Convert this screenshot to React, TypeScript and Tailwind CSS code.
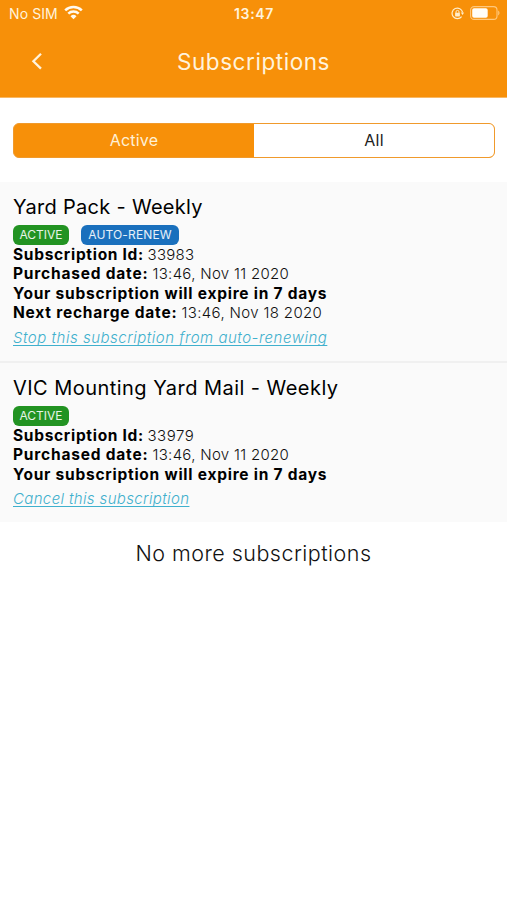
import type { ReactNode } from "react";

function Row({ children }: { children: ReactNode }) {
  return <div className="flex h-[19.6px] items-baseline whitespace-pre text-[15px] leading-[20px]">{children}</div>;
}

function Label({ className, children }: { className: string; children: ReactNode }) {
  return <b className={`shrink-0 text-[15.5px] font-bold text-black ${className}`}>{children}</b>;
}

function Value({ className, children }: { className: string; children: ReactNode }) {
  return <span className={`shrink-0 font-light text-[#111] ${className}`}>{children}</span>;
}

function Badge({ className, children }: { className: string; children: ReactNode }) {
  return (
    <span className={`flex h-[20px] items-center justify-center rounded-[6px] text-[12px] leading-none text-white/90 ${className}`}>
      {children}
    </span>
  );
}

function StatusBar() {
  return (
    <div className="grid h-[27px] grid-cols-3 items-center text-[#fff3dc]">
      <div className="flex items-center gap-[6px] pl-[9px] text-[14px] leading-none">
        <span className="tracking-[0.1px]">No SIM</span>
        <svg className="-mt-[2px]" width="19" height="15" viewBox="0 0 19 15" fill="none" stroke="#fffaf0" strokeWidth="2.5">
          <path d="M1.2 5.3a11.8 11.8 0 0 1 16.6 0" />
          <path d="M4.3 8.6a7.4 7.4 0 0 1 10.4 0" />
          <path d="M9.5 14.3 6.5 11.2a4.3 4.3 0 0 1 6 0Z" fill="#fffaf0" stroke="none" />
        </svg>
      </div>
      <div className="pl-[1px] text-center text-[14px] font-semibold leading-none tracking-[0.7px]">13:47</div>
      <div className="flex items-center justify-end gap-[6px] pr-[7px]">
        <svg width="13" height="13" viewBox="0 0 13 13" fill="none" stroke="#ffedcc">
          <path d="M10.6 9.6A5.3 5.3 0 1 1 11.6 5.4" strokeWidth="1.2" />
          <path d="M9.8 5.6h3.2l-1.4 2.4z" fill="#ffedcc" stroke="none" />
          <path d="M5 6V4.9a1.5 1.5 0 0 1 3 0V6" strokeWidth="1" />
          <rect x="4.1" y="5.8" width="4.8" height="3.6" rx=".6" fill="#ffedcc" stroke="none" />
        </svg>
        <svg className="-mt-[1px]" width="30" height="14" viewBox="0 0 30 14" fill="none">
          <rect x=".6" y=".6" width="26.4" height="12.8" rx="3.5" stroke="#ffc87d" strokeWidth="1.1" />
          <rect x="2.2" y="2.2" width="15.5" height="9.6" rx="1.8" fill="#fffdf8" />
          <path d="M28.2 4.6c1.7.7 1.7 4.1 0 4.8z" fill="#ffc87d" />
        </svg>
      </div>
    </div>
  );
}

export default function App() {
  return (
    <div className="flex h-[900px] w-full flex-col overflow-hidden bg-white font-['Inter',sans-serif] text-black">
      <header className="h-[98px] border-b border-[#f8b865] bg-[#f79009]">
        <StatusBar />
        <div className="grid h-[70px] grid-cols-[60px_1fr_60px] items-center">
          <svg className="ml-[31px] -mt-[2px]" width="12" height="18" viewBox="0 0 12 18" fill="none" stroke="#fff3dc" strokeWidth="2.3">
            <path d="M10 1.8 2.4 9.2 10 16.6" />
          </svg>
          <h1 className="text-center text-[22.5px] leading-none tracking-[0.55px] text-[#fff3dc]">Subscriptions</h1>
        </div>
      </header>

      <div className="h-[84px] pl-[13px] pr-[12px] pt-[24.5px]">
        <div className="flex h-[35.5px] overflow-hidden rounded-[6px] border border-[#f09a2c] bg-[#f79009] text-[16px] leading-none">
          <div className="flex flex-1 items-center justify-center tracking-[0.2px] text-[#fff0d6]">Active</div>
          <div className="flex flex-1 items-center justify-center bg-white tracking-[0.3px] text-[#222]">All</div>
        </div>
      </div>

      <section className="h-[181px] border-b-2 border-[#f0f0f0] bg-[#fafafa] px-[13px] pt-[13px]">
        <h2 className="h-[29.5px] text-[20px] leading-[24px] tracking-[0.3px]">Yard Pack - Weekly</h2>
        <div className="flex gap-[12px]">
          <Badge className="w-[56px] bg-[#229322]">ACTIVE</Badge>
          <Badge className="w-[98px] bg-[#1a70bd] tracking-[0.15px]">AUTO-RENEW</Badge>
        </div>
        <Row>
          <Label className="w-[134.5px] tracking-[0.7px]">Subscription Id:</Label>
          <Value className="tracking-[0.3px]">33983</Value>
        </Row>
        <Row>
          <Label className="w-[139.5px] tracking-[0.8px]">Purchased date:</Label>
          <Value className="tracking-[0.3px]">13:46, Nov 11 2020</Value>
        </Row>
        <Row>
          <Label className="tracking-[0.76px]">Your subscription will expire in 7 days</Label>
        </Row>
        <Row>
          <Label className="w-[168.5px] tracking-[0.78px]">Next recharge date:</Label>
          <Value className="tracking-[0.35px]">13:46, Nov 18 2020</Value>
        </Row>
        <a className="mt-[6px] block text-[15px] font-light italic leading-[18px] tracking-[0.51px] text-[#3fb0cd] underline underline-offset-2 [text-decoration-skip-ink:none]">
          Stop this subscription from auto-renewing
        </a>
      </section>

      <section className="h-[159px] bg-[#fafafa] px-[13px] pt-[13px]">
        <h2 className="h-[29.5px] text-[20px] leading-[24px] tracking-[0.46px]">VIC Mounting Yard Mail - Weekly</h2>
        <div className="flex">
          <Badge className="w-[56px] bg-[#229322]">ACTIVE</Badge>
        </div>
        <Row>
          <Label className="w-[134.5px] tracking-[0.7px]">Subscription Id:</Label>
          <Value className="tracking-[0.5px]">33979</Value>
        </Row>
        <Row>
          <Label className="w-[139.5px] tracking-[0.8px]">Purchased date:</Label>
          <Value className="tracking-[0.3px]">13:46, Nov 11 2020</Value>
        </Row>
        <Row>
          <Label className="tracking-[0.76px]">Your subscription will expire in 7 days</Label>
        </Row>
        <a className="mt-[6px] block text-[15px] font-light italic leading-[18px] tracking-[0.36px] text-[#3fb0cd] underline underline-offset-2 [text-decoration-skip-ink:none]">
          Cancel this subscription
        </a>
      </section>

      <p className="pt-[18px] text-center text-[21.5px] font-light leading-[26px] tracking-[0.47px] text-[#111]">No more subscriptions</p>
    </div>
  );
}
